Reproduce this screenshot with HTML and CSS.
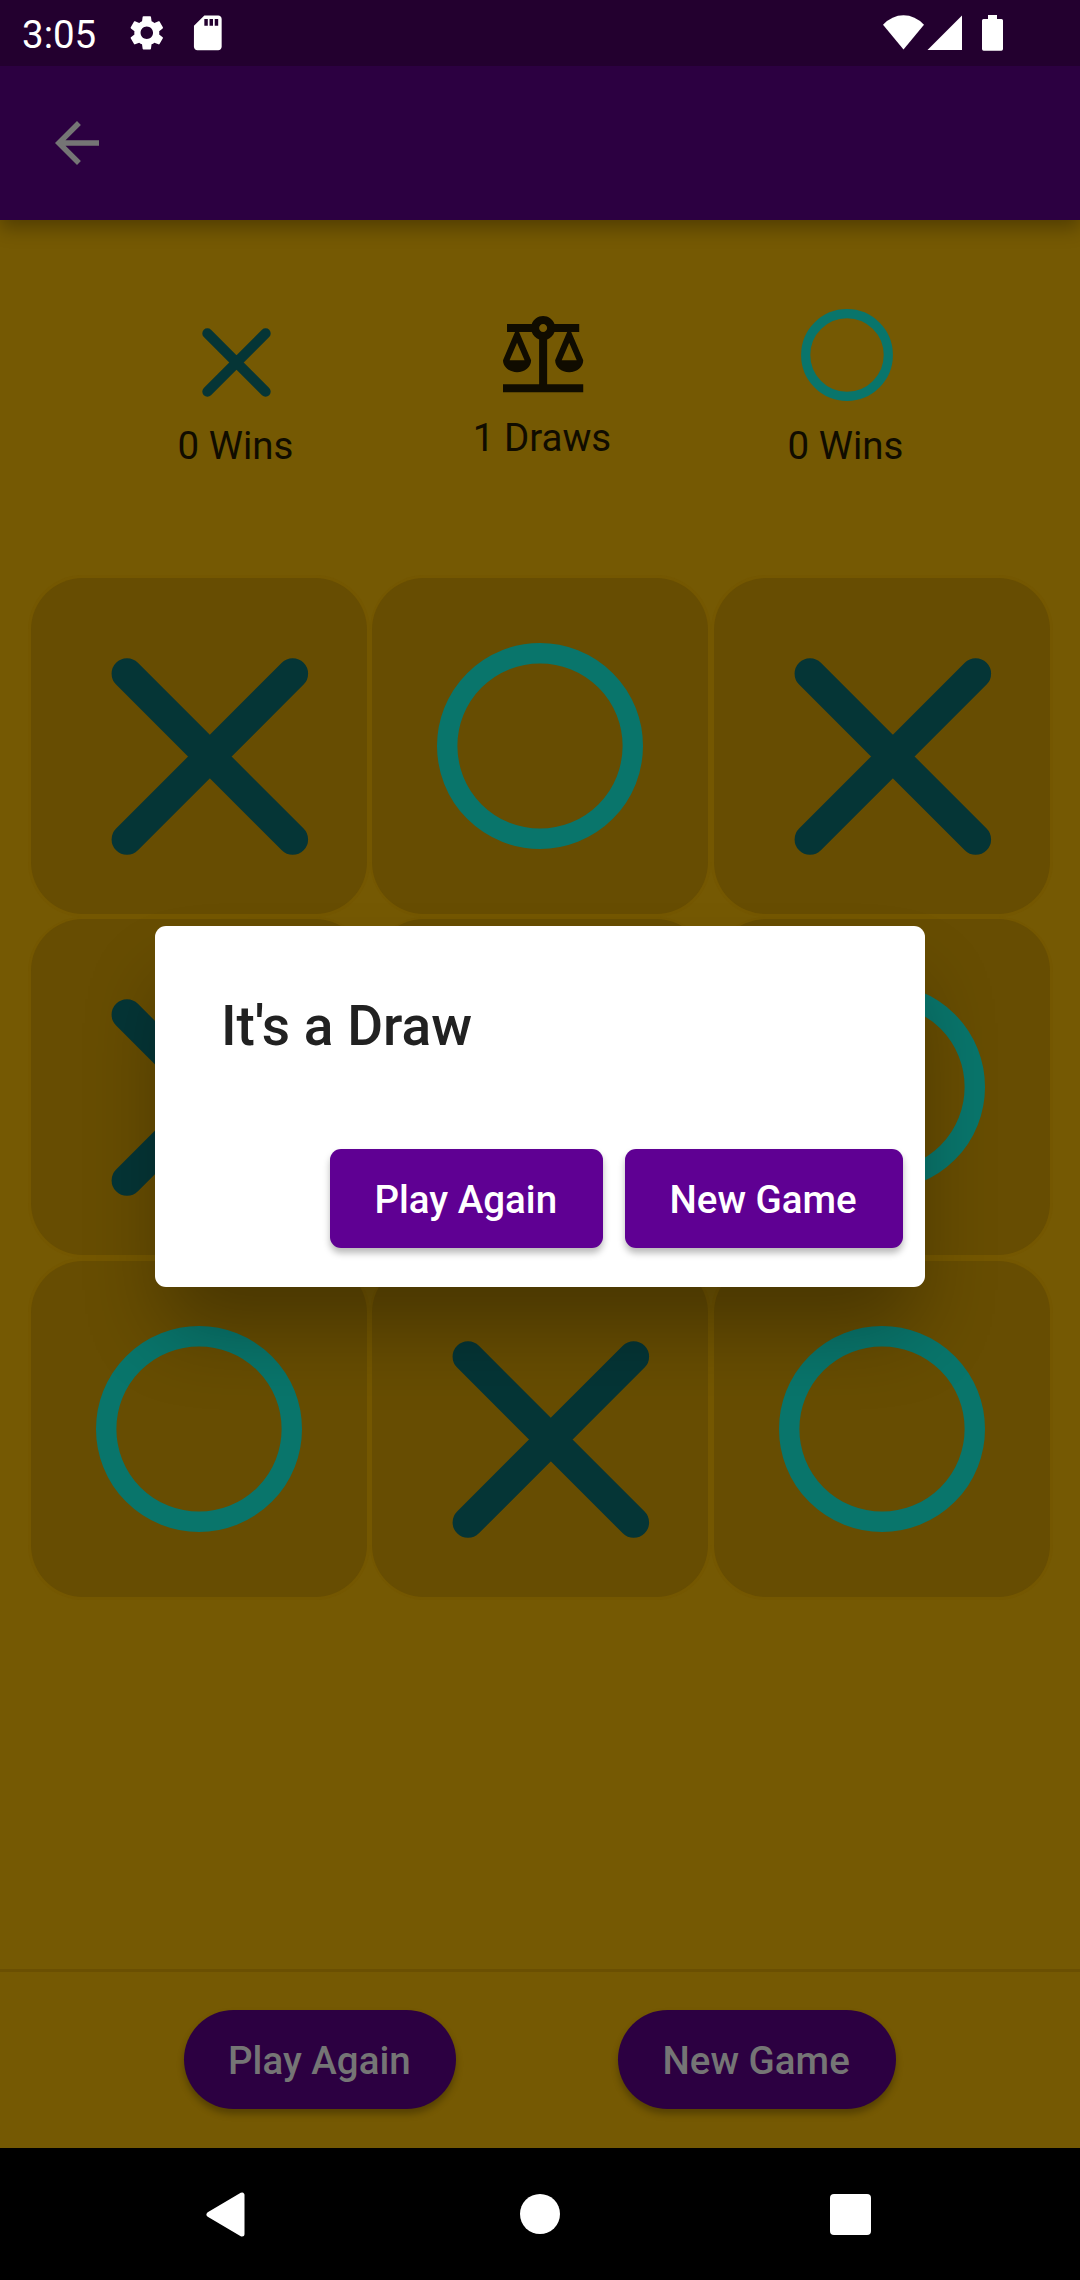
FILE: index.html
```html
<!DOCTYPE html>
<html lang="en">
<head>
<meta charset="utf-8">
<title>Tic Tac Toe</title>
<link rel="stylesheet" href="styles.css">
</head>
<body>
<svg class="defs" width="0" height="0" aria-hidden="true">
  <symbol id="mark-x" viewBox="0 0 336 336"><path d="M96 95.700L261.700 261.400M261.700 95.700L96 261.400" fill="none" stroke="#053536" stroke-width="30.8" stroke-linecap="round"/></symbol>
  <symbol id="mark-o" viewBox="0 0 336 336"><circle cx="168" cy="168" r="92.8" fill="none" stroke="#09756b" stroke-width="20.4"/></symbol>
</svg>
<div class="screen">
  <div class="status-bar">
    <span class="clock">3:05</span>
    <svg class="status-gear" viewBox="0 0 24 24"><path d="M19.14 12.94c.04-.3.06-.61.06-.94 0-.32-.02-.64-.07-.94l2.03-1.58c.18-.14.23-.41.12-.61l-1.92-3.32c-.12-.22-.37-.29-.59-.22l-2.39.96c-.5-.38-1.03-.7-1.62-.94l-.36-2.54c-.04-.24-.24-.41-.48-.41h-3.84c-.24 0-.43.17-.47.41l-.36 2.54c-.59.24-1.13.57-1.62.94l-2.39-.96c-.22-.08-.47 0-.59.22L2.74 8.87c-.12.21-.08.47.12.61l2.03 1.58c-.05.3-.09.63-.09.94s.02.64.07.94l-2.03 1.58c-.18.14-.23.41-.12.61l1.92 3.32c.12.22.37.29.59.22l2.39-.96c.5.38 1.03.7 1.62.94l.36 2.54c.05.24.24.41.48.41h3.84c.24 0 .44-.17.47-.41l.36-2.54c.59-.24 1.13-.56 1.62-.94l2.39.96c.22.08.47 0 .59-.22l1.92-3.32c.12-.22.07-.47-.12-.61l-2.01-1.58zM12 15.6c-1.98 0-3.6-1.62-3.6-3.6s1.62-3.6 3.6-3.6 3.6 1.62 3.6 3.6-1.62 3.6-3.6 3.6z"/></svg>
    <svg class="status-sd" viewBox="0 0 24 24"><path d="M18 2h-8L4.02 8 4 20c0 1.100.9 2 2 2h12c1.100 0 2-.9 2-2V4c0-1.100-.9-2-2-2zm-6 6h-2V4h2zm3 0h-2V4h2zm3 0h-2V4h2z"/></svg>
    <svg class="status-signals" width="120" height="36" viewBox="0 0 120 36">
      <path d="M0 9.700Q9 .2 20.500.2T41 9.700L20.500 34.500z"/>
      <path d="M44.500 35L79 .5V35z"/>
      <path d="M105 0h9v4h4.500q1.500 0 1.500 1.500v28.500q0 1.700-1.700 1.700h-17.600q-1.700 0-1.700-1.700V5.500q0-1.500 1.500-1.500h4.500z"/>
    </svg>
  </div>
  <div class="app-bar">
    <svg class="back" viewBox="0 0 24 24"><path d="M20 11H7.830l5.590-5.590L12 4l-8 8 8 8 1.410-1.410L7.830 13H20z"/></svg>
  </div>
  <main class="game">
    <section class="scores">
      <div class="score">
        <svg class="score-x" viewBox="0 0 69 69"><path d="M5.400 5.400L63.600 63.600M63.600 5.400L5.400 63.600" fill="none" stroke="#053536" stroke-width="10.200" stroke-linecap="round"/></svg>
        <span>0 Wins</span>
      </div>
      <div class="score score-mid">
        <svg class="score-draw" viewBox="0 0 24 24"><path d="M13 7.830c.85-.3 1.530-.98 1.830-1.830H18l-3 7c0 1.660 1.570 3 3.500 3s3.500-1.340 3.500-3l-3-7h2V4h-6.170C14.420 2.830 13.310 2 12 2S9.580 2.830 9.170 4H3v2h2l-3 7c0 1.660 1.570 3 3.500 3S9 14.660 9 13L6 6h3.170c.3.85.98 1.530 1.830 1.830V19H2v2h20v-2h-9V7.830zM20.370 13h-3.740l1.870-4.360L20.370 13zM7.370 13H3.630L5.500 8.640 7.370 13zM12 6c-.55 0-1-.45-1-1s.45-1 1-1 1 .45 1 1-.45 1-1 1z"/></svg>
        <span>1 Draws</span>
      </div>
      <div class="score">
        <svg class="score-o" viewBox="0 0 92 92"><circle cx="46" cy="46" r="41.300" fill="none" stroke="#09756b" stroke-width="9.200"/></svg>
        <span>0 Wins</span>
      </div>
    </section>
    <section class="board">
      <div class="cell"><svg><use href="#mark-x"/></svg></div>
      <div class="cell"><svg><use href="#mark-o"/></svg></div>
      <div class="cell"><svg><use href="#mark-x"/></svg></div>
      <div class="cell"><svg><use href="#mark-x"/></svg></div>
      <div class="cell"><svg><use href="#mark-x"/></svg></div>
      <div class="cell"><svg><use href="#mark-o"/></svg></div>
      <div class="cell"><svg><use href="#mark-o"/></svg></div>
      <div class="cell"><svg><use href="#mark-x"/></svg></div>
      <div class="cell"><svg><use href="#mark-o"/></svg></div>
    </section>
  </main>
  <footer class="footer">
    <button class="btn btn-pill btn-play">Play Again</button>
    <button class="btn btn-pill btn-new">New Game</button>
  </footer>
  <nav class="nav-bar">
    <svg class="nav-back" viewBox="0 0 39 45"><path d="M3 22.500L36 3V42z" stroke="#fff" stroke-width="5" stroke-linejoin="round"/></svg>
    <span class="nav-home"></span>
    <span class="nav-recent"></span>
  </nav>
  <div class="dialog" role="dialog">
    <h1 class="dialog-title">It's a Draw</h1>
    <div class="dialog-actions">
      <button class="btn btn-play">Play Again</button>
      <button class="btn btn-new">New Game</button>
    </div>
  </div>
</div>
</body>
</html>
```

FILE: styles.css
```css
* { box-sizing: border-box; }

body {
  margin: 0;
  font-family: Roboto, "Liberation Sans", sans-serif;
  font-size: 38.5px;
}

svg { display: block; flex: none; }
.defs { position: absolute; }

.screen {
  position: relative;
  display: flex;
  flex-direction: column;
  width: 1080px;
  height: 2280px;
  overflow: hidden;
  background: #755903;
}

.status-bar {
  display: flex;
  align-items: center;
  position: relative;
  z-index: 1;
  height: 66px;
  padding-left: 22px;
  background: #23002f;
  color: #fff;
  fill: #fff;
}
.clock { width: 103.500px; line-height: 66px; padding-top: 3px; }
.status-gear, .status-sd { width: 41.600px; height: 41.600px; }
.status-sd { margin-left: 19.500px; }
.status-signals { margin-left: 654.800px; }

.app-bar {
  display: flex;
  align-items: center;
  position: relative;
  height: 154px;
  padding-left: 44px;
  background: #2c0041;
  box-shadow: 0 8px 18px rgba(0, 0, 0, .3);
}
.back { width: 66px; height: 66px; fill: #757575; }

.game { flex: 1; }

.scores {
  display: grid;
  grid-template-columns: 200px 200px 200px;
  column-gap: 105px;
  height: 355px;
  padding: 88px 0 0 136px;
  color: #100c00;
}
.score {
  display: flex;
  flex-direction: column;
  align-items: center;
  line-height: 45px;
}
.score span { margin-right: 1px; }
.score-x { width: 69px; height: 69px; margin: 19.500px 0 26.500px; }
.score-draw { width: 96.250px; height: 96.250px; fill: #100c00; margin: 0 0 11px 1px; }
.score-mid { margin-left: 3px; }
.score-o { width: 92px; height: 92px; margin: 1px 0 22px 1px; }

.board {
  display: grid;
  grid-template-columns: repeat(3, 1fr);
  grid-auto-rows: 341.500px;
  padding: 0 27.500px 0 28px;
}
.cell {
  padding: 2.750px;
  border-radius: 55px;
  background: #745701;
}
.cell svg {
  width: 100%;
  height: 100%;
  border-radius: 52px;
  background: #674d02;
}

.footer {
  display: flex;
  justify-content: center;
  gap: 161.500px;
  height: 179px;
  padding-top: 38.300px;
  border-top: 3px solid #6a4f02;
}

.btn {
  flex: none;
  height: 99px;
  padding: 2px 1.500px 0 0;
  border: 0;
  border-radius: 11px;
  background: #5f0093;
  color: #fff;
  font: 500 38.500px/97px Roboto, "Liberation Sans", sans-serif;
  text-align: center;
  box-shadow: 0 5px 7px rgba(0, 0, 0, .28);
}
.btn-play { width: 272.300px; }
.btn-new { width: 278.300px; }
.btn-pill {
  border-radius: 49.500px;
  background: #2c0041;
  color: #757575;
}

.nav-bar {
  display: flex;
  align-items: center;
  height: 132px;
  padding-left: 206px;
  background: #000;
  fill: #fff;
}
.nav-back { width: 39px; height: 45px; }
.nav-home {
  width: 40.500px;
  height: 40.500px;
  margin-left: 274.500px;
  border-radius: 50%;
  background: #fff;
}
.nav-recent {
  width: 41.500px;
  height: 41.500px;
  margin: 1px 0 0 269.500px;
  border-radius: 4px;
  background: #fff;
}

.dialog {
  position: absolute;
  top: 926.300px;
  left: 155px;
  width: 770px;
  height: 360.700px;
  padding: 67px 22px 0 66px;
  border-radius: 11px;
  background: #fff;
  box-shadow: 0 50px 80px -10px rgba(0, 0, 0, .3);
}
.dialog-title {
  margin: 0;
  color: #212121;
  font-size: 55px;
  font-weight: 500;
  line-height: 66px;
}
.dialog-actions {
  display: flex;
  justify-content: flex-end;
  gap: 22px;
  margin-top: 90px;
}
```
